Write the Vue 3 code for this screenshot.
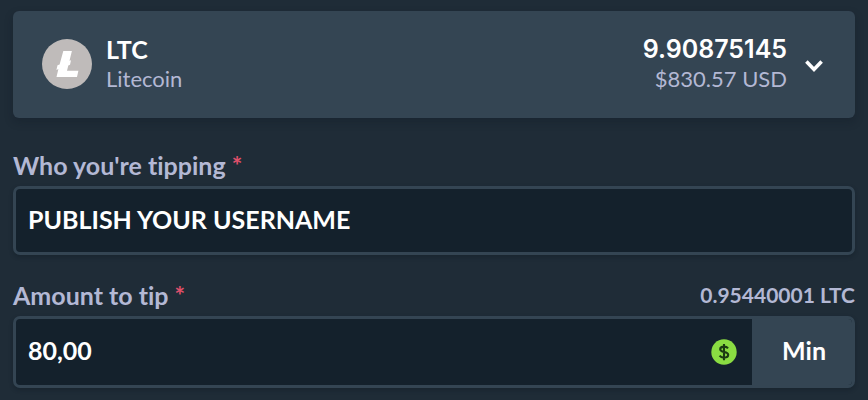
<script setup>
import { ref } from 'vue'

const username = ref('PUBLISH YOUR USERNAME')
const amount = ref('80,00')
</script>

<template>
  <form class="tip" @submit.prevent>
    <button type="button" class="coin">
      <svg class="coin-logo" viewBox="0 0 50 50" aria-hidden="true">
        <circle cx="25" cy="25" r="25" fill="#bfbbba" />
        <path d="M21.3 12h8.6l-2.4 9.8 1.5-.6-1 4.500-1.700.7-1.300 5.400h11.400l-1.400 6.300H14.500l1.900-8-2 .8 1.100-4.600 2.100-.8z" fill="#fff" />
      </svg>
      <span class="coin-name">
        <span class="strong">LTC</span>
        <span class="sub">Litecoin</span>
      </span>
      <span class="coin-balance">
        <span class="strong figures">9.90875145</span>
        <span class="sub">$830.57 USD</span>
      </span>
      <svg class="chevron" viewBox="0 0 18 12" aria-hidden="true">
        <path d="M1.400 1.600 9 9.400l7.600-7.800" fill="none" stroke="#fff" stroke-width="3.600" />
      </svg>
    </button>

    <div class="field">
      <div class="label-row">
        <label for="username">Who you're tipping <span class="required">*</span></label>
      </div>
      <div class="control">
        <input id="username" v-model="username" type="text" spellcheck="false" autocomplete="off" />
      </div>
    </div>

    <div class="field">
      <div class="label-row">
        <label for="amount">Amount to tip <span class="required">*</span></label>
        <span class="converted">0.95440001 LTC</span>
      </div>
      <div class="control amount">
        <input id="amount" v-model="amount" type="text" inputmode="decimal" autocomplete="off" />
        <svg class="currency" viewBox="0 0 26 26" aria-hidden="true">
          <circle cx="13" cy="13" r="12.7" fill="#8adc42" />
          <path d="M17 9.400C16.200 8.200 14.800 7.600 13 7.600c-2.300 0-3.800 1.100-3.800 2.700 0 3.800 8 1.700 8 5.500 0 1.700-1.600 2.800-4.100 2.800-2 0-3.600-.7-4.500-2M13 5v16.200" fill="none" stroke="#1b3a12" stroke-width="2.100" />
        </svg>
        <button type="button" class="min">Min</button>
      </div>
    </div>
  </form>
</template>

<style>
body {
  background: #1f2c37;
}
</style>

<style scoped>
.tip {
  display: flex;
  flex-direction: column;
  padding: 11px 13px 12px;
  font-family: Lato, "Liberation Sans", sans-serif;
  font-variant-ligatures: none;
  color: #fff;
}

.coin {
  display: flex;
  align-items: center;
  margin: 0 0 32px;
  padding: 23px 32px 24px 29px;
  border: 0;
  border-radius: 6px;
  background: #344553;
  box-shadow: 0 4px 8px rgba(10, 20, 30, 0.25);
  color: inherit;
  font-family: inherit;
  text-align: left;
}

.coin-logo {
  width: 50px;
  height: 50px;
  margin-right: 14px;
}

.coin-name,
.coin-balance {
  display: flex;
  flex-direction: column;
}

.coin-balance {
  margin-left: auto;
  margin-right: 18px;
  text-align: right;
}

.strong {
  font-size: 25px;
  font-weight: 700;
  line-height: 30px;
}

.figures {
  font-family: Inter, sans-serif;
  font-weight: 600;
}

.sub {
  color: #b3b8d4;
  font-size: 22px;
  line-height: 30px;
}

.chevron {
  width: 18px;
  height: 12px;
  margin-top: 3px;
}

.field {
  display: flex;
  flex-direction: column;
  margin-bottom: 25px;
}

.field:last-child {
  margin-bottom: 0;
}

.label-row {
  display: flex;
  justify-content: space-between;
  align-items: center;
  margin-bottom: 6px;
  color: #b3b8d4;
  font-weight: 700;
  line-height: 30px;
}

label {
  font-size: 25px;
}

.required {
  color: #e0506a;
}

.converted {
  font-size: 21px;
}

.control {
  display: flex;
  align-items: center;
  overflow: hidden;
  border: 3px solid #344553;
  border-radius: 7px;
  background: #14212c;
  box-shadow: 0 2px 4px rgba(10, 20, 30, 0.3);
}

.control input {
  box-sizing: border-box;
  flex: 1;
  min-width: 0;
  height: 63px;
  padding: 0 12px 4px;
  border: 0;
  outline: 0;
  background: transparent;
  color: #fff;
  font-family: inherit;
  font-size: 25px;
  font-weight: 700;
}

.amount input {
  height: 66px;
}

.currency {
  width: 26px;
  height: 26px;
  margin-right: 15px;
}

.min {
  align-self: stretch;
  padding: 0 26px 4px 30px;
  border: 0;
  background: #344553;
  color: #fff;
  font-family: inherit;
  font-size: 25px;
  font-weight: 700;
}
</style>
